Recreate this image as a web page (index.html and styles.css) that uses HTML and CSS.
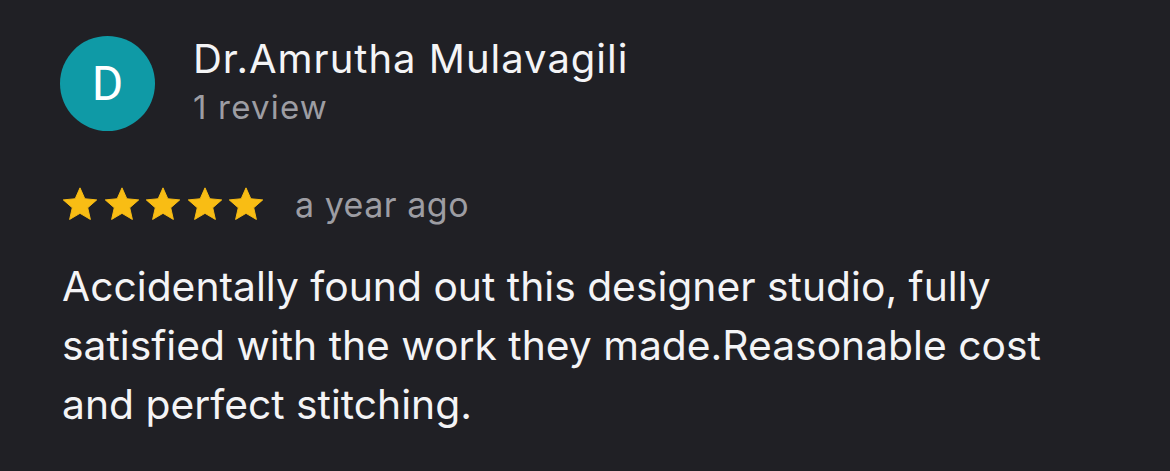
FILE: index.html
```html
<!DOCTYPE html>
<html lang="en">
<head>
<meta charset="utf-8">
<link rel="stylesheet" href="styles.css">
</head>
<body>
<div class="review">
  <div class="header">
    <div class="avatar">D</div>
    <div class="who">
      <div class="name">Dr.Amrutha Mulavagili</div>
      <div class="count">1 review</div>
    </div>
  </div>
  <div class="meta">
    <div class="stars">
      <svg class="star" viewBox="0 0 24 24"><path d="M12 1.8l3.05 6.9 7.5.7-5.67 4.98 1.68 7.37L12 17.9l-6.56 3.85 1.68-7.37L1.45 9.4l7.5-.7z"/></svg>
      <svg class="star" viewBox="0 0 24 24"><path d="M12 1.8l3.05 6.9 7.5.7-5.67 4.98 1.68 7.37L12 17.9l-6.56 3.85 1.68-7.37L1.45 9.4l7.5-.7z"/></svg>
      <svg class="star" viewBox="0 0 24 24"><path d="M12 1.8l3.05 6.9 7.5.7-5.67 4.98 1.68 7.37L12 17.9l-6.56 3.85 1.68-7.37L1.45 9.4l7.5-.7z"/></svg>
      <svg class="star" viewBox="0 0 24 24"><path d="M12 1.8l3.05 6.9 7.5.7-5.67 4.98 1.68 7.37L12 17.9l-6.56 3.85 1.68-7.37L1.45 9.4l7.5-.7z"/></svg>
      <svg class="star" viewBox="0 0 24 24"><path d="M12 1.8l3.05 6.9 7.5.7-5.67 4.98 1.68 7.37L12 17.9l-6.56 3.85 1.68-7.37L1.45 9.4l7.5-.7z"/></svg>
    </div>
    <span class="when">a year ago</span>
  </div>
  <p class="text">Accidentally found out this designer studio, fully satisfied with the work they made.Reasonable cost and perfect stitching.</p>
</div>
</body>
</html>
```
FILE: styles.css
```css
html, body {
  margin: 0;
  padding: 0;
  background: #202025;
  height: 100%;
}
body {
  font-family: Inter, "Noto Sans", sans-serif;
  color: #f2f2f4;
  overflow: hidden;
}
.review {
  padding: 36px 0 0 60px;
}
.header {
  display: flex;
  align-items: flex-start;
  gap: 38px;
}
.avatar {
  width: 95px;
  height: 95px;
  border-radius: 50%;
  background: #0f9aa6;
  color: #fff;
  display: flex;
  align-items: center;
  justify-content: center;
  font-family: Roboto, sans-serif;
  font-size: 48px;
  flex: none;
}
.who {
  padding-top: 1px;
}
.name {
  font-size: 40px;
  line-height: 44px;
  letter-spacing: 1px;
  color: #f4f4f6;
}
.count {
  margin-top: 4px;
  font-size: 33px;
  line-height: 44px;
  letter-spacing: 1.2px;
  color: #9d9da3;
}
.meta {
  display: flex;
  align-items: center;
  margin-top: 53px;
  height: 40px;
}
.stars {
  display: flex;
  gap: 3.5px;
  margin-left: 1px;
}
.star {
  width: 38px;
  height: 38px;
  fill: #f9bd14;
  stroke: #f9bd14;
  stroke-width: 0.6;
  stroke-linejoin: round;
}
.when {
  margin-left: 30px;
  font-size: 34px;
  letter-spacing: 0.5px;
  color: #9d9da3;
}
.text {
  margin: 33px 0 0 2px;
  font-size: 40.8px;
  line-height: 59px;
  color: #f4f4f6;
  width: 1000px;
}
```
